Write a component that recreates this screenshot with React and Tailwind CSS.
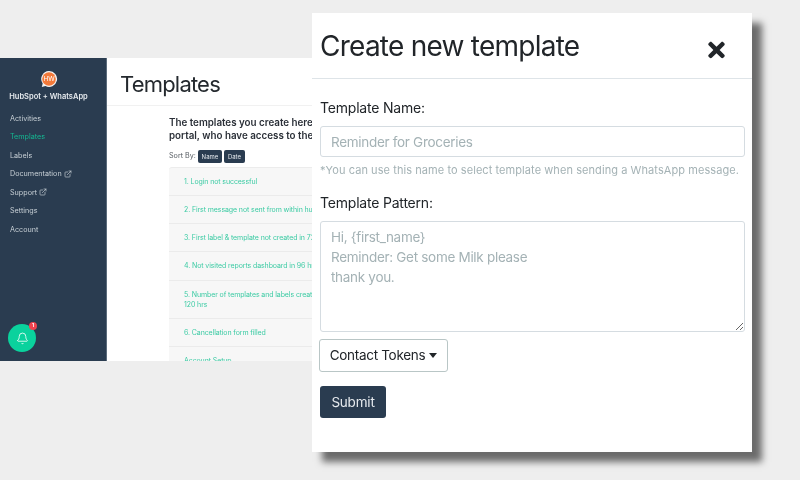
import React from 'react';
import { Bell, ExternalLink } from 'lucide-react';
import { FaTimes } from 'react-icons/fa';

const navItems = [
    { label: 'Activities' },
    { label: 'Templates', active: true },
    { label: 'Labels' },
    { label: 'Documentation', external: true },
    { label: 'Support', external: true },
    { label: 'Settings' },
    { label: 'Account' }
];

const rows = [
    { text: '1. Login not successful', height: 'h-[28px]' },
    { text: '2. First message not sent from within hubspot', height: 'h-[28px]' },
    { text: '3. First label & template not created in 72 hrs', height: 'h-[28px]' },
    { text: '4. Not visited reports dashboard in 96 hrs', height: 'h-[29px]' },
    { text: '5. Number of templates and labels created', second: '120 hrs', height: 'h-[38px]' },
    { text: '6. Cancellation form filled', height: 'h-[28px]' },
    { text: 'Account Setup', height: 'h-[28px]' }
];

const Sidebar = () => (
    <aside className="relative flex w-[107px] shrink-0 flex-col items-stretch border-r border-[#5b6b7b] bg-[#2a3c50]">
        <div className="flex w-[97px] flex-col items-center pt-[12px]">
            <svg width="18" height="18" viewBox="0 0 18 18">
                <path d="M9 1a8 8 0 1 1-3.6 15.1L1.8 17l.9-3.4A8 8 0 0 1 9 1z" fill="#f4f4f4" />
                <circle cx="9" cy="9" r="6.8" fill="#f47a3a" />
                <text x="9" y="11.4" textAnchor="middle" fontSize="6.5" fill="#ffffff" fontFamily="Inter, sans-serif">HW</text>
            </svg>
            <p className="mt-[3px] whitespace-nowrap text-[7.5px] leading-[12px] font-semibold text-[#e6eaee]">HubSpot + WhatsApp</p>
        </div>
        <nav className="mt-[7px] flex flex-col pl-[10px]">
            {navItems.map((item) => (
                <div key={item.label} className={`flex h-[18.5px] items-center gap-[2px] text-[7.2px] ${item.active ? 'text-[#14b892]' : 'text-[#c8d0d6]'}`}>
                    {item.label}
                    {item.external && <ExternalLink className="mb-[2px] h-[8px] w-[8px]" />}
                </div>
            ))}
        </nav>
        <div className="absolute bottom-[9px] left-[8px] flex h-[28px] w-[28px] items-center justify-center rounded-full bg-[#0ad29d]">
            <Bell className="h-[13px] w-[13px] text-white" strokeWidth={1.5} />
            <span className="absolute -top-[2px] -right-[1px] flex h-[8px] w-[8px] items-center justify-center rounded-full bg-[#f0434f] text-[5px] font-bold text-white">1</span>
        </div>
    </aside>
);

const MainPanel = () => (
    <main className="min-w-0 flex-1 overflow-hidden bg-white">
        <div className="flex h-[48px] items-center border-b border-[#f1f1f1] pt-[4px] pl-[13px]">
            <h1 className="text-[22px] leading-[28px] tracking-[-0.8px] text-[#24292e]">Templates</h1>
        </div>
        <div className="pt-[10px] pl-[62px]">
            <p className="whitespace-nowrap text-[9.8px] leading-[13px] font-semibold text-[#2b3038]">
                The templates you create here are visible to all
                <br />
                portal, who have access to the HubSpot account.
            </p>
            <div className="mt-[8px] flex items-center gap-[2px] text-[7.2px] text-[#555b61]">
                <span>Sort By:</span>
                <span className="flex h-[13px] w-[24px] items-center justify-center rounded-[2px] bg-[#2a3c50] text-[6px] text-[#e6eaee]">Name</span>
                <span className="flex h-[13px] w-[21px] items-center justify-center rounded-[2px] bg-[#2a3c50] text-[6px] text-[#e6eaee]">Date</span>
            </div>
            <div className="mt-[4px] w-[300px] rounded-t-[3px] border-t border-[#ececec] bg-[#f7f7f7]">
                {rows.map((row) => (
                    <div key={row.text} className={`flex flex-col justify-center border-b border-[#ebebeb] pl-[15px] text-[7px] leading-[10px] tracking-[-0.1px] whitespace-nowrap text-[#3ccba4] ${row.height}`}>
                        <span>{row.text}</span>
                        {row.second && <span>{row.second}</span>}
                    </div>
                ))}
            </div>
        </div>
    </main>
);

const CreateTemplateModal = () => (
    <section className="absolute top-[13px] left-[312px] h-[439px] w-[440px] bg-white shadow-[10px_10px_7px_rgba(0,0,0,0.55)]">
        <header className="flex h-[66px] items-start justify-between border-b border-[#dee4e8] pt-[15px] pr-[25px] pl-[8px]">
            <h2 className="text-[28px] leading-[36px] tracking-[-0.75px] text-[#212529]">Create new template</h2>
            <FaTimes className="mt-[10px] h-[24px] w-[21px] text-[#212529]" />
        </header>
        <form className="px-[8px] pt-[19px]">
            <label className="block text-[14px] leading-[20px] tracking-[-0.2px] text-[#212529]">Template Name:</label>
            <input
                placeholder="Reminder for Groceries"
                className="mt-[8px] block h-[31px] w-[425px] rounded-[3px] border border-[#d5dce1] bg-white px-[10px] text-[13.5px] tracking-[-0.3px] outline-none placeholder:text-[#a4b2b5]"
            />
            <p className="mt-[5px] whitespace-nowrap text-[11px] leading-[16px] tracking-[0.07px] text-[#a4b2b5]">*You can use this name to select template when sending a WhatsApp message.</p>
            <label className="mt-[15px] block text-[14px] leading-[20px] tracking-[-0.2px] text-[#212529]">Template Pattern:</label>
            <textarea
                placeholder={'Hi, {first_name}\nReminder: Get some Milk please\nthank you.'}
                className="mt-[8px] block h-[111px] w-[425px] rounded-[3px] border border-[#d5dce1] bg-white px-[10px] py-[5px] text-[13.5px] leading-[20px] tracking-[-0.3px] outline-none placeholder:text-[#a4b2b5]"
            />
            <button type="button" className="-ml-[1px] mt-[7px] flex h-[33px] w-[129px] items-center justify-center gap-[4px] rounded-[3px] border border-[#b9c6c6] bg-white text-[13.5px] tracking-[-0.3px] text-[#212529]">
                Contact Tokens
                <span className="h-0 w-0 border-x-[4.5px] border-t-[5px] border-x-transparent border-t-[#212529]" />
            </button>
            <button type="button" className="mt-[14px] block h-[32px] w-[66px] rounded-[3px] bg-[#2a3c50] text-[13.5px] tracking-[-0.2px] text-[#e6eaee]">Submit</button>
        </form>
    </section>
);

export default function App() {
    return (
        <div className="relative h-[480px] w-[800px] overflow-hidden bg-[#eeeeee] pt-[58px] font-['Inter',sans-serif] blur-[0.35px]">
            <div className="flex h-[303px] w-[312px] overflow-hidden">
                <Sidebar />
                <MainPanel />
            </div>
            <CreateTemplateModal />
        </div>
    );
}
